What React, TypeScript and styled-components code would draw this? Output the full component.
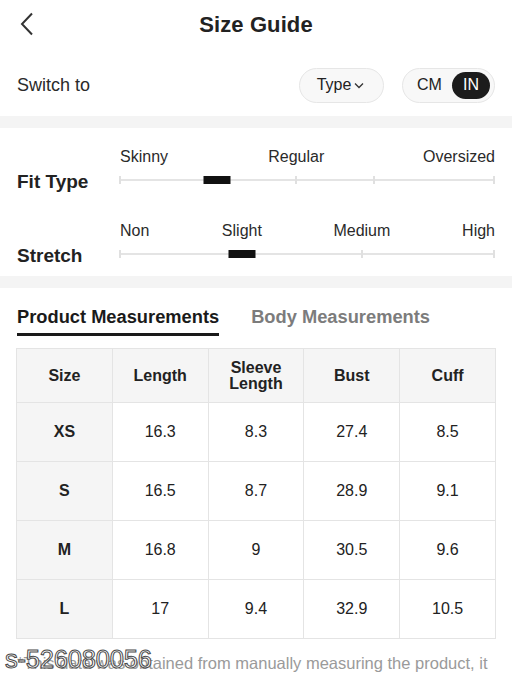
import React from "react";
import styled, { createGlobalStyle } from "styled-components";

const GlobalStyle = createGlobalStyle`
  html, body {
    margin: 0;
    padding: 0;
    background: #fff;
    overflow: hidden;
  }
  body {
    font-family: "Liberation Sans", Arial, sans-serif;
    color: #222;
  }
  * {
    box-sizing: border-box;
  }
`;

const Page = styled.div`
  width: 512px;
  height: 677px;
  overflow: hidden;
  position: relative;
`;

const Header = styled.div`
  height: 48px;
  display: grid;
  grid-template-columns: 1fr auto 1fr;
  align-items: center;
  padding: 0 17px;
`;

const BackButton = styled.button`
  border: none;
  background: none;
  padding: 0;
  width: 24px;
  height: 28px;
  display: flex;
  align-items: center;
  color: #333;
  margin-left: 3px;
`;

const Title = styled.h1`
  margin: 0;
  font-size: 22px;
  font-weight: 700;
  color: #222;
  letter-spacing: 0.1px;
  padding-top: 1px;
`;

const SwitchRow = styled.div`
  height: 68px;
  display: flex;
  align-items: center;
  padding: 6px 17px 0;
  gap: 18px;
`;

const SwitchLabel = styled.span`
  font-size: 18px;
  color: #2a2a2a;
  flex: 1;
`;

const Pill = styled.div`
  height: 35px;
  border-radius: 18px;
  border: 1px solid #e6e6e6;
  background: #f8f8f8;
  display: flex;
  align-items: center;
`;

const TypePill = styled(Pill)`
  width: 85px;
  justify-content: center;
  font-size: 16px;
  color: #222;
  gap: 3px;
  padding-right: 2px;
`;

const UnitPill = styled(Pill)`
  width: 93px;
  padding: 0 4px 0 14px;
  justify-content: space-between;
`;

const UnitOption = styled.span<{ $active?: boolean }>`
  font-size: 16px;
  height: 27px;
  display: flex;
  align-items: center;
  justify-content: center;
  border-radius: 14px;
  padding: ${(p) => (p.$active ? "0 11px" : "0")};
  background: ${(p) => (p.$active ? "#1c1c1c" : "transparent")};
  color: ${(p) => (p.$active ? "#fff" : "#222")};
`;

const Band = styled.div`
  height: 12px;
  background: #f4f4f4;
`;

const FitSection = styled.div`
  padding: 20px 17px 8px;
  display: flex;
  flex-direction: column;
  gap: 28px;
`;

const ScaleRow = styled.div`
  display: grid;
  grid-template-columns: 103px 1fr;
  grid-template-rows: 20px 26px;
  align-items: center;
`;

const ScaleTitle = styled.span`
  grid-column: 1;
  grid-row: 2;
  font-size: 19px;
  font-weight: 700;
  color: #222;
  padding-top: 1px;
`;

const ScaleLabels = styled.div`
  grid-column: 2;
  grid-row: 1;
  position: relative;
  height: 20px;
`;

const ScaleLabel = styled.span<{ $anchor: "start" | "center" | "end" }>`
  position: absolute;
  top: 0;
  font-size: 16px;
  color: #2a2a2a;
  white-space: nowrap;
  transform: ${(p) =>
    p.$anchor === "center"
      ? "translateX(-50%)"
      : p.$anchor === "end"
      ? "translateX(-100%)"
      : "none"};
`;

const Track = styled.div`
  grid-column: 2;
  grid-row: 2;
  position: relative;
  height: 2px;
  background: #e4e4e4;
  margin-right: 1px;
  top: -1px;
`;

const Tick = styled.span`
  position: absolute;
  top: -3px;
  width: 2px;
  height: 8px;
  background: #e0e0e0;
  transform: translateX(-50%);
`;

const Thumb = styled.span`
  position: absolute;
  top: -3px;
  width: 27px;
  height: 8px;
  background: #111;
  transform: translateX(-50%);
`;

const Tabs = styled.div`
  display: flex;
  gap: 32px;
  padding: 18px 17px 0;
`;

const Tab = styled.div<{ $active?: boolean }>`
  font-size: 18.3px;
  font-weight: 700;
  color: ${(p) => (p.$active ? "#1a1a1a" : "#7c7c7c")};
  padding-bottom: 5px;
  border-bottom: 3px solid ${(p) => (p.$active ? "#1a1a1a" : "transparent")};
`;

const Table = styled.table`
  margin: 12px 16px 0;
  width: 480px;
  border-collapse: collapse;
  table-layout: fixed;
  font-size: 16px;
`;

const HeadCell = styled.th`
  height: 54px;
  background: #f5f5f5;
  border: 1px solid #e4e4e4;
  font-weight: 700;
  color: #222;
  line-height: 16px;
  text-align: center;
`;

const SizeCell = styled.td`
  height: 59px;
  background: #f5f5f5;
  border: 1px solid #e4e4e4;
  font-weight: 700;
  text-align: center;
  color: #222;
`;

const Cell = styled.td`
  height: 59px;
  border: 1px solid #e4e4e4;
  text-align: center;
  color: #222;
`;

const Note = styled.p`
  margin: 14px 0 0;
  padding: 0 17px;
  font-size: 16.5px;
  color: #9a9a9a;
  line-height: 20px;
  position: relative;
`;

const Watermark = styled.span`
  position: absolute;
  left: 5px;
  top: -4px;
  font-size: 25.5px;
  color: rgba(255, 255, 255, 0.85);
  -webkit-text-stroke: 1px #4a4a4a;
  letter-spacing: -0.2px;
  pointer-events: none;
`;

type Mark = { text: string; at: number; anchor: "start" | "center" | "end" };

const scales: {
  title: string;
  marks: Mark[];
  ticks: number[];
  value: number;
}[] = [
  {
    title: "Fit Type",
    marks: [
      { text: "Skinny", at: 0, anchor: "start" },
      { text: "Regular", at: 47, anchor: "center" },
      { text: "Oversized", at: 100, anchor: "end" },
    ],
    ticks: [0, 47, 68, 100],
    value: 26,
  },
  {
    title: "Stretch",
    marks: [
      { text: "Non", at: 0, anchor: "start" },
      { text: "Slight", at: 32.5, anchor: "center" },
      { text: "Medium", at: 64.5, anchor: "center" },
      { text: "High", at: 100, anchor: "end" },
    ],
    ticks: [0, 64.7, 100],
    value: 32.5,
  },
];

const headers = ["Size", "Length", "Sleeve Length", "Bust", "Cuff"];
const rows = [
  ["XS", "16.3", "8.3", "27.4", "8.5"],
  ["S", "16.5", "8.7", "28.9", "9.1"],
  ["M", "16.8", "9", "30.5", "9.6"],
  ["L", "17", "9.4", "32.9", "10.5"],
];

function ChevronDown() {
  return (
    <svg width="10" height="7" viewBox="0 0 10 7" fill="none">
      <path d="M1 1.5l4 4 4-4" stroke="#333" strokeWidth="1.3" />
    </svg>
  );
}

export default function App() {
  return (
    <Page>
      <GlobalStyle />
      <Header>
        <BackButton aria-label="back">
          <svg width="14" height="24" viewBox="0 0 14 24" fill="none">
            <path d="M12 1.5L2 12l10 10.5" stroke="#333" strokeWidth="2" />
          </svg>
        </BackButton>
        <Title>Size Guide</Title>
        <span />
      </Header>

      <SwitchRow>
        <SwitchLabel>Switch to</SwitchLabel>
        <TypePill>
          Type
          <ChevronDown />
        </TypePill>
        <UnitPill>
          <UnitOption>CM</UnitOption>
          <UnitOption $active>IN</UnitOption>
        </UnitPill>
      </SwitchRow>

      <Band />

      <FitSection>
        {scales.map((s) => (
          <ScaleRow key={s.title}>
            <ScaleLabels>
              {s.marks.map((m) => (
                <ScaleLabel key={m.text} $anchor={m.anchor} style={{ left: `${m.at}%` }}>
                  {m.text}
                </ScaleLabel>
              ))}
            </ScaleLabels>
            <ScaleTitle>{s.title}</ScaleTitle>
            <Track>
              {s.ticks.map((t) => (
                <Tick key={t} style={{ left: `${t}%` }} />
              ))}
              <Thumb style={{ left: `${s.value}%` }} />
            </Track>
          </ScaleRow>
        ))}
      </FitSection>

      <Band />

      <Tabs>
        <Tab $active>Product Measurements</Tab>
        <Tab>Body Measurements</Tab>
      </Tabs>

      <Table>
        <thead>
          <tr>
            {headers.map((h) => (
              <HeadCell key={h}>
                {h === "Sleeve Length" ? (
                  <>
                    Sleeve
                    <br />
                    Length
                  </>
                ) : (
                  h
                )}
              </HeadCell>
            ))}
          </tr>
        </thead>
        <tbody>
          {rows.map((r) => (
            <tr key={r[0]}>
              <SizeCell>{r[0]}</SizeCell>
              {r.slice(1).map((v, i) => (
                <Cell key={i}>{v}</Cell>
              ))}
            </tr>
          ))}
        </tbody>
      </Table>

      <Note>
        *This data was obtained from manually measuring the product, it may be off by 1-2 CM.
        <Watermark>s-526080056</Watermark>
      </Note>
    </Page>
  );
}
